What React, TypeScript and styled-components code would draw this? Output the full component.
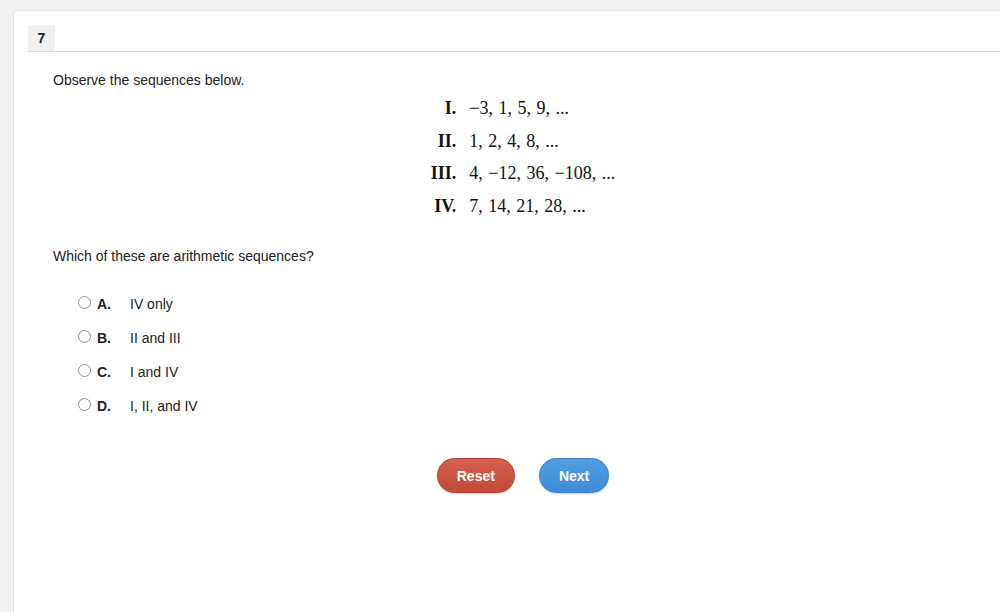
import React, { useState } from "react";
import styled, { createGlobalStyle } from "styled-components";

const GlobalStyle = createGlobalStyle`
  html, body {
    margin: 0;
    padding: 0;
    background: #f0f0f0;
    overflow: hidden;
    font-family: "Liberation Sans", Arial, sans-serif;
  }
`;

const Card = styled.div`
  margin: 10px 0 0 13px;
  width: 1000px;
  min-height: 620px;
  box-sizing: border-box;
  background: #ffffff;
  border: 1px solid #e3e3e3;
  border-radius: 6px 0 0 0;
  padding: 14px 0 0 14px;
`;

const Header = styled.div`
  display: flex;
  height: 26px;
  border-bottom: 1px solid #dcdcdc;
`;

const NumberBox = styled.div`
  width: 27px;
  height: 26px;
  background: #f0f0f0;
  display: flex;
  align-items: center;
  justify-content: center;
  font-size: 14px;
  font-weight: bold;
  color: #222;
`;

const Body = styled.div`
  width: 940px;
  padding: 20px 0 0 25px;
  color: #222;
  font-size: 14px;
`;

const Prompt = styled.p<{ gap?: number }>`
  margin: ${({ gap }) => gap ?? 0}px 0 0 0;
  line-height: 16px;
`;

const SeqTable = styled.div`
  display: grid;
  grid-template-columns: auto auto;
  column-gap: 13px;
  justify-content: center;
  margin-top: 4px;
  font-family: "Liberation Serif", "Times New Roman", serif;
  font-size: 18px;
  color: #111;
`;

const SeqLabel = styled.div`
  text-align: right;
  font-weight: bold;
  line-height: 32.5px;
`;

const SeqTerms = styled.div`
  line-height: 32.5px;
  word-spacing: 1px;
`;

const Options = styled.div`
  display: flex;
  flex-direction: column;
  margin-top: 23px;
  padding-left: 25px;
`;

const OptionRow = styled.label`
  display: flex;
  align-items: center;
  height: 34px;
  cursor: pointer;
`;

const Radio = styled.input`
  appearance: none;
  width: 13px;
  height: 13px;
  margin: -3px 6px 0 0;
  border: 1px solid #8f8f8f;
  border-radius: 50%;
  background: #fff;
  box-sizing: border-box;
  &:checked {
    border-color: #3b82d6;
    box-shadow: inset 0 0 0 3px #fff;
    background: #3b82d6;
  }
`;

const Letter = styled.span`
  font-weight: bold;
  width: 33px;
`;

const Buttons = styled.div`
  display: flex;
  justify-content: center;
  gap: 24px;
  margin-top: 35px;
`;

const PillButton = styled.button<{ tone: "red" | "blue" }>`
  height: 35px;
  padding: 0 19px;
  border-radius: 18px;
  border: 1px solid ${({ tone }) => (tone === "red" ? "#b0402f" : "#3481c9")};
  background: ${({ tone }) =>
    tone === "red"
      ? "linear-gradient(#d4604b, #c24a37)"
      : "linear-gradient(#519fe2, #3c8bd6)"};
  color: #fff;
  font-family: "Liberation Sans", Arial, sans-serif;
  font-size: 14px;
  font-weight: bold;
  box-shadow: 0 1px 2px rgba(0, 0, 0, 0.2);
  cursor: pointer;
`;

const sequences = [
  { label: "I.", terms: "\u22123, 1, 5, 9, ..." },
  { label: "II.", terms: "1, 2, 4, 8, ..." },
  { label: "III.", terms: "4, \u221212, 36, \u2212108, ..." },
  { label: "IV.", terms: "7, 14, 21, 28, ..." },
];

const choices = [
  { letter: "A.", text: "IV only" },
  { letter: "B.", text: "II and III" },
  { letter: "C.", text: "I and IV" },
  { letter: "D.", text: "I, II, and IV" },
];

const App: React.FC = () => {
  const [picked, setPicked] = useState<string | null>(null);

  return (
    <>
      <GlobalStyle />
      <Card>
        <Header>
          <NumberBox>7</NumberBox>
        </Header>
        <Body>
          <Prompt>Observe the sequences below.</Prompt>
          <SeqTable>
            {sequences.map((s) => (
              <React.Fragment key={s.label}>
                <SeqLabel>{s.label}</SeqLabel>
                <SeqTerms>{s.terms}</SeqTerms>
              </React.Fragment>
            ))}
          </SeqTable>
          <Prompt gap={26}>Which of these are arithmetic sequences?</Prompt>
          <Options>
            {choices.map((c) => (
              <OptionRow key={c.letter}>
                <Radio
                  type="radio"
                  name="answer"
                  checked={picked === c.letter}
                  onChange={() => setPicked(c.letter)}
                />
                <Letter>{c.letter}</Letter>
                <span>{c.text}</span>
              </OptionRow>
            ))}
          </Options>
          <Buttons>
            <PillButton tone="red" onClick={() => setPicked(null)}>
              Reset
            </PillButton>
            <PillButton tone="blue">Next</PillButton>
          </Buttons>
        </Body>
      </Card>
    </>
  );
};

export default App;
